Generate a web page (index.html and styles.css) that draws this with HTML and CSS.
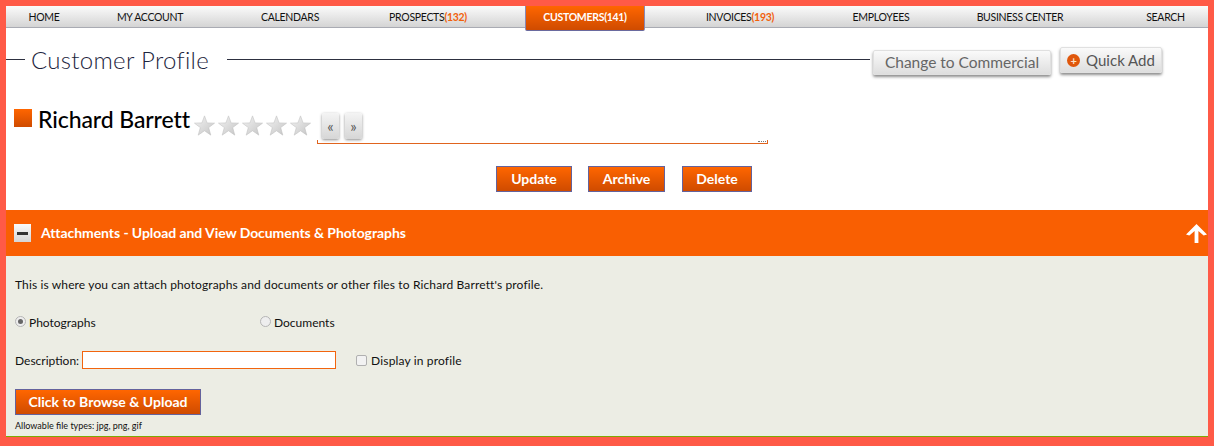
FILE: index.html
```html
<!DOCTYPE html>
<html lang="en">
<head>
  <meta charset="UTF-8" />
  <title>Customer Profile</title>
  <link rel="stylesheet" href="styles.css">
</head>
<body>
<div class="frame">
  <nav class="navbar">
    <a class="nav-home" href="#">HOME</a>
    <a class="nav-account" href="#">MY ACCOUNT</a>
    <a class="nav-calendars" href="#">CALENDARS</a>
    <a class="nav-prospects" href="#">PROSPECTS<span class="count">(132)</span></a>
    <a class="nav-customers active" href="#">CUSTOMERS(141)</a>
    <a class="nav-invoices" href="#">INVOICES<span class="count">(193)</span></a>
    <a class="nav-employees" href="#">EMPLOYEES</a>
    <a class="nav-business" href="#">BUSINESS CENTER</a>
    <a class="nav-search" href="#">SEARCH</a>
  </nav>

  <div class="title-row">
    <span class="rule rule-short"></span>
    <h1>Customer Profile</h1>
    <span class="rule rule-long"></span>
    <button class="grey-btn change-btn">Change to Commercial</button>
    <button class="grey-btn quick-btn"><span class="plus">+</span>Quick Add</button>
  </div>

  <div class="name-row">
    <span class="name-square"></span>
    <h2>Richard Barrett</h2>
    <div class="stars">
      <svg viewBox="0 0 24 24"><use href="#star"/></svg>
      <svg viewBox="0 0 24 24"><use href="#star"/></svg>
      <svg viewBox="0 0 24 24"><use href="#star"/></svg>
      <svg viewBox="0 0 24 24"><use href="#star"/></svg>
      <svg viewBox="0 0 24 24"><use href="#star"/></svg>
    </div>
    <div class="notes">
      <div class="pager">
        <button class="page-btn prev">«</button>
        <button class="page-btn">»</button>
      </div>
      <div class="notes-edge"><span class="grip"></span></div>
    </div>
  </div>

  <div class="actions">
    <button class="orange-btn update-btn">Update</button>
    <button class="orange-btn archive-btn">Archive</button>
    <button class="orange-btn delete-btn">Delete</button>
  </div>

  <div class="section-head">
    <span class="minus"></span>
    <h3>Attachments - Upload and View Documents &amp; Photographs</h3>
    <svg class="up-arrow" viewBox="0 0 22 20"><path d="M11 0 L22 11 L18.5 12 L13 7.5 L13 20 L9 20 L9 7.5 L3.5 12 L0 11 Z" fill="#fff"/></svg>
  </div>

  <div class="section-body">
    <p class="intro">This is where you can attach photographs and documents or other files to Richard Barrett's profile.</p>
    <div class="radios">
      <label class="radio-photos"><span class="radio checked"></span>Photographs</label>
      <label><span class="radio"></span>Documents</label>
    </div>
    <div class="desc-row">
      <label for="desc">Description:</label>
      <input type="text" id="desc">
      <span class="check"></span>
      <span class="display-label">Display in profile</span>
    </div>
    <button class="orange-btn upload-btn">Click to Browse &amp; Upload</button>
    <div class="file-types">Allowable file types: jpg, png, gif</div>
  </div>
</div>

<svg class="defs" width="0" height="0">
  <defs>
    <linearGradient id="starfill" x1="0" y1="0" x2="1" y2="1">
      <stop offset="0" stop-color="#f4f4f4"/>
      <stop offset="1" stop-color="#c4c4c4"/>
    </linearGradient>
    <path id="star" d="M12 1 L15 9 L23.5 9.3 L16.8 14.4 L19.2 23 L12 18 L4.8 23 L7.2 14.4 L0.5 9.3 L9 9 Z" fill="url(#starfill)" stroke="#bdbdbd" stroke-width="0.6"/>
  </defs>
</svg>
</body>
</html>
```

FILE: styles.css
```css
html, body {
  margin: 0;
  height: 100%;
  overflow: hidden;
}

body {
  font-family: 'Lato', sans-serif;
  font-size: 12px;
  color: #111;
  background-color: #ff5a47;
}

button {
  font-family: inherit;
  cursor: pointer;
}

.frame {
  margin: 6px 6px 0;
  width: 1202px;
  height: 431px;
  background-color: #fff;
  border-bottom: 1px solid #7fa800;
  box-sizing: border-box;
}

.defs {
  display: block;
}

/* top menu */
.navbar {
  display: flex;
  height: 21px;
  background: linear-gradient(#fbfbfb, #d4d4d4);
  border-bottom: 1px solid #a9abb3;
}

.navbar a {
  display: block;
  box-sizing: border-box;
  text-align: center;
  line-height: 22px;
  font-size: 10.5px;
  letter-spacing: -0.3px;
  color: #111;
  text-decoration: none;
  white-space: nowrap;
}

.navbar .count {
  color: #f2600a;
  font-weight: bold;
}

.nav-home { width: 76px; }
.nav-account { width: 136px; }
.nav-calendars { width: 144px; }
.nav-prospects { width: 163px; padding-right: 31px; }
.nav-invoices { width: 190px; }
.nav-employees { width: 92px; }
.nav-business { width: 186px; }
.nav-search { width: 95px; padding-left: 10px; }

.navbar .active {
  width: 120px;
  height: 25px;
  background: linear-gradient(#ff6600, #cf4b00);
  color: #fff;
  font-weight: bold;
  border-left: 1px solid #8a88b4;
  border-right: 1px solid #8a88b4;
  border-bottom: 1px solid #6a6a9e;
  border-radius: 0 0 2px 2px;
}

/* page title */
.title-row {
  display: flex;
  align-items: center;
  height: 63px;
}

.title-row h1 {
  margin: 0 18px 0 6px;
  font-size: 24px;
  font-weight: 300;
  letter-spacing: 0.3px;
  color: #1d2540;
  white-space: nowrap;
}

.rule {
  height: 1px;
  background-color: #2d3040;
}

.rule-short {
  width: 19px;
}

.rule-long {
  flex: 1;
}

.grey-btn {
  background: linear-gradient(#fafafa, #dedede);
  border: 1px solid #e0e0e0;
  box-shadow: 0 2px 3px #8d8d8d;
  border-radius: 2px;
  color: #666;
  padding: 0;
  font-size: 15px;
}

.change-btn {
  width: 178px;
  height: 25px;
  margin: 5px 0 0 3px;
  font-size: 15.5px;
}

.quick-btn {
  width: 102px;
  height: 26px;
  margin: 0 46px 0 9px;
  color: #555;
}

.plus {
  display: inline-block;
  width: 13px;
  height: 13px;
  line-height: 13px;
  margin-right: 6px;
  border-radius: 50%;
  background-color: #e0570c;
  color: #fde3c8;
  font-size: 11px;
  font-weight: bold;
  vertical-align: 1px;
}

/* customer name line */
.name-row {
  display: flex;
  align-items: flex-start;
  height: 75px;
}

.name-square {
  width: 18px;
  height: 18px;
  margin: 18px 6px 0 8px;
  background: linear-gradient(#ff6600, #cf4b00);
}

.name-row h2 {
  width: 151px;
  margin: 14px 7px 0 0;
  font-size: 23px;
  font-weight: 500;
  letter-spacing: -0.1px;
  color: #000;
  white-space: nowrap;
}

.stars {
  display: flex;
  margin: 24px 0 0 -2px;
}

.stars svg {
  width: 21px;
  height: 21px;
  margin-right: 3px;
}

.notes {
  width: 451px;
  margin: 22px 0 0 3px;
}

.pager {
  display: flex;
  gap: 6px;
  padding-left: 5px;
  height: 26px;
}

.page-btn {
  width: 17px;
  height: 26px;
  padding: 0;
  background: linear-gradient(#f4f4f4, #d6d6d6);
  border: none;
  border-radius: 2px;
  box-shadow: 0 1px 3px #8d8d8d;
  color: #555;
  font-size: 15px;
}

.notes-edge {
  position: relative;
  height: 3px;
  margin-top: 1px;
  border: 1px solid #e0641e;
  border-top: none;
}

.grip {
  position: absolute;
  right: 1px;
  top: -2px;
  width: 8px;
  height: 3px;
  border-bottom: 1px dotted #777;
}

/* update / archive / delete */
.orange-btn {
  background: linear-gradient(#ff6600, #cf4b00);
  border: 1px solid #64629c;
  color: #fff;
  font-size: 14px;
  font-weight: bold;
  padding: 0 0 2px;
}

.actions {
  display: flex;
  height: 26px;
  padding-left: 490px;
}

.update-btn { width: 76px; }
.archive-btn { width: 77px; margin-left: 16px; }
.delete-btn { width: 70px; margin-left: 17px; }

/* attachments section */
.section-head {
  display: flex;
  align-items: center;
  height: 46px;
  margin-top: 18px;
  padding: 0 1px 0 8px;
  background-color: #f95f02;
}

.section-head h3 {
  flex: 1;
  margin: 0 0 2px 10px;
  color: #fff;
  font-size: 14px;
  font-weight: bold;
  letter-spacing: -0.07px;
}

.minus {
  display: flex;
  align-items: center;
  justify-content: center;
  width: 17px;
  height: 18px;
  background: linear-gradient(#fafafa, #d5d5d5);
}

.minus::before {
  content: "";
  width: 11px;
  height: 3px;
  background-color: #333;
}

.up-arrow {
  width: 21px;
  height: 21px;
}

.section-body {
  height: 180px;
  box-sizing: border-box;
  padding: 21px 9px 0;
  background-color: #ecede4;
}

.intro {
  margin: 0;
  line-height: 15px;
  letter-spacing: 0.13px;
}

.radios {
  display: flex;
  margin-top: 23px;
  line-height: 15px;
}

.radio-photos {
  width: 245px;
}

.radio {
  display: inline-block;
  position: relative;
  width: 9px;
  height: 9px;
  margin-right: 3px;
  border: 1px solid #b5b5b5;
  border-radius: 50%;
  background-color: #eee;
}

.radio.checked::after {
  content: "";
  position: absolute;
  left: 2px;
  top: 2px;
  width: 5px;
  height: 5px;
  border-radius: 50%;
  background-color: #666;
}

.desc-row {
  display: flex;
  align-items: center;
  margin-top: 21px;
  height: 18px;
}

.desc-row input {
  width: 254px;
  height: 18px;
  box-sizing: border-box;
  margin: 0 20px 0 3px;
  border: 1px solid #f2640e;
  background-color: #fff;
  padding: 0 2px;
}

.check {
  width: 9px;
  height: 9px;
  margin-right: 4px;
  border: 1px solid #b0b0b0;
  border-radius: 2px;
  background-color: #f2f2f2;
}

.display-label {
  letter-spacing: 0.15px;
}

.upload-btn {
  display: block;
  width: 186px;
  height: 26px;
  margin-top: 20px;
}

.file-types {
  margin-top: 5px;
  font-size: 9px;
  line-height: 12px;
}
```
